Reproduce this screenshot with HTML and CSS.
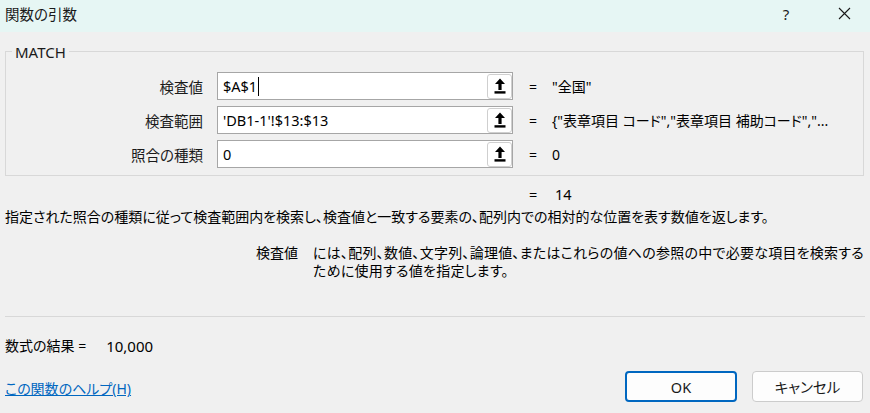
FILE: index.html
```html
<!DOCTYPE html>
<html lang="ja">
<head>
<meta charset="utf-8">
<title>関数の引数</title>
<link rel="stylesheet" href="styles.css">
</head>
<body>
<div class="dialog">
  <div class="titlebar">
    <div class="title">関数の引数</div>
    <div class="tb-controls">
      <span class="tb-help">?</span>
      <span class="tb-close">
        <svg width="13" height="13" viewBox="0 0 13 13"><path d="M1 1 L12 12 M12 1 L1 12" stroke="#1a1a1a" stroke-width="1.1" fill="none"/></svg>
      </span>
    </div>
  </div>
  <div class="main">
    <div class="group">
      <div class="legend">MATCH</div>
      <div class="rows">
        <div class="row">
          <div class="label">検査値</div>
          <div class="input"><span class="val">$A$1<span class="caret"></span></span>
            <span class="pick"><svg width="12" height="16" viewBox="0 0 12 16"><path d="M6 0.5 L11 6 L7.6 6 L7.6 12 L4.4 12 L4.4 6 L1 6 Z" fill="#000"/><rect x="0.5" y="13.2" width="11" height="2.4" fill="#000"/></svg></span>
          </div>
          <div class="eq">=</div>
          <div class="res">"全国"</div>
        </div>
        <div class="row">
          <div class="label">検査範囲</div>
          <div class="input"><span class="val">'DB1-1'!$13:$13</span>
            <span class="pick"><svg width="12" height="16" viewBox="0 0 12 16"><path d="M6 0.5 L11 6 L7.6 6 L7.6 12 L4.4 12 L4.4 6 L1 6 Z" fill="#000"/><rect x="0.5" y="13.2" width="11" height="2.4" fill="#000"/></svg></span>
          </div>
          <div class="eq">=</div>
          <div class="res">{"表章項目 コード","表章項目 補助コード","...</div>
        </div>
        <div class="row">
          <div class="label">照合の種類</div>
          <div class="input"><span class="val">0</span>
            <span class="pick"><svg width="12" height="16" viewBox="0 0 12 16"><path d="M6 0.5 L11 6 L7.6 6 L7.6 12 L4.4 12 L4.4 6 L1 6 Z" fill="#000"/><rect x="0.5" y="13.2" width="11" height="2.4" fill="#000"/></svg></span>
          </div>
          <div class="eq">=</div>
          <div class="res">0</div>
        </div>
      </div>
    </div>
    <div class="total"><span class="eq">=</span><span class="res">14</span></div>
    <p class="desc">指定された照合の種類に従って検査範囲内を検索し、検査値と一致する要素の、配列内での相対的な位置を表す数値を返します。</p>
    <div class="argdesc">
      <div class="arg-name">検査値</div>
      <div class="arg-text">には、配列、数値、文字列、論理値、またはこれらの値への参照の中で必要な項目を検索する<br>ために使用する値を指定します。</div>
    </div>
    <div class="sep"></div>
    <div class="formula"><span>数式の結果 =</span><span class="fval">10,000</span></div>
    <div class="footer">
      <a class="help" href="#">この関数のヘルプ(H)</a>
      <div class="buttons">
        <button class="btn btn-ok">OK</button>
        <button class="btn">キャンセル</button>
      </div>
    </div>
  </div>
</div>
</body>
</html>
```
FILE: styles.css
```css
html, body {
  margin: 0;
  padding: 0;
}
body {
  width: 870px;
  height: 413px;
  overflow: hidden;
  background: #f0f0f0;
  font-family: "Noto Sans", "Noto Sans CJK JP", sans-serif;
  font-feature-settings: "palt";
  font-size: 14px;
  color: #000;
}
.dialog {
  width: 870px;
  height: 413px;
}
.titlebar {
  height: 32px;
  background: #e6f6f4;
  display: flex;
  justify-content: space-between;
  align-items: center;
}
.title {
  padding-left: 5px;
  line-height: 20px;
  margin-top: -4px;
  font-size: 14.5px;
  color: #1a1a1a;
}
.tb-controls {
  display: flex;
  align-items: center;
  gap: 36px;
  padding-right: 14px;
  margin-top: -5px;
}
.tb-help {
  width: 20px;
  text-align: center;
  font-size: 15px;
  color: #1a1a1a;
}
.tb-close {
  width: 24px;
  display: flex;
  justify-content: center;
}
.main {
  padding: 0 5px;
}
.group {
  margin-top: 19px;
  margin-right: 1px;
  border: 1px solid #d8d8d8;
  padding-bottom: 7px;
}
.legend {
  width: fit-content;
  margin: -10px 0 0 6px;
  padding: 0 3px;
  background: #f0f0f0;
  line-height: 20px;
  font-size: 15px;
  color: #1a1a1a;
}
.rows {
  margin-top: 10px;
  display: flex;
  flex-direction: column;
  gap: 6px;
}
.row {
  display: flex;
  align-items: center;
  height: 28px;
}
.label {
  width: 197px;
  text-align: right;
  margin-right: 14px;
  font-size: 14.5px;
  color: #1a1a1a;
}
.input {
  width: 296px;
  height: 28px;
  box-sizing: border-box;
  border: 1px solid #a6a6a6;
  background: #fff;
  display: flex;
  align-items: center;
  justify-content: space-between;
}
.val {
  padding-left: 5px;
  display: flex;
  align-items: center;
  font-size: 14.5px;
}
.caret {
  display: inline-block;
  width: 1px;
  height: 19px;
  background: #000;
  margin-left: 1px;
}
.pick {
  width: 25px;
  height: 25px;
  box-sizing: border-box;
  border: 1px solid #cfcfcf;
  border-radius: 3px;
  background: #fff;
  display: flex;
  align-items: center;
  justify-content: center;
}
.row .eq {
  margin-left: 16px;
  width: 23px;
}
.res {
  white-space: nowrap;
}
.total {
  margin-top: 8px;
  line-height: 20px;
  padding-left: 524px;
  display: flex;
  font-size: 14.5px;
}
.total .eq {
  width: 26px;
}
.desc {
  margin: 3px 0 0;
  line-height: 20px;
  white-space: nowrap;
}
.argdesc {
  margin-top: 17px;
  display: flex;
  line-height: 18px;
}
.arg-name {
  width: 293px;
  text-align: right;
  margin-right: 15px;
  flex-shrink: 0;
}
.arg-text {
  white-space: nowrap;
  letter-spacing: 0.25px;
}
.sep {
  margin-top: 36px;
  height: 1px;
  background: #d8d8d8;
}
.formula {
  margin-top: 19px;
  line-height: 20px;
  display: flex;
}
.fval {
  margin-left: 20px;
  font-size: 15px;
}
.footer {
  margin-top: 15px;
  display: flex;
  justify-content: space-between;
  align-items: center;
}
.help {
  color: #0067c0;
  text-decoration: underline;
  line-height: 20px;
  margin-top: 5px;
}
.buttons {
  display: flex;
  gap: 15px;
  margin-right: 2px;
}
.btn {
  width: 111px;
  height: 31px;
  box-sizing: border-box;
  border: 1px solid #cccccc;
  border-radius: 4px;
  background: #fdfdfd;
  font-family: inherit;
  font-feature-settings: "palt";
  font-size: 14.5px;
  color: #1a1a1a;
  padding: 0;
}
.btn-ok {
  width: 112px;
  border: 2px solid #0067c0;
}
```
